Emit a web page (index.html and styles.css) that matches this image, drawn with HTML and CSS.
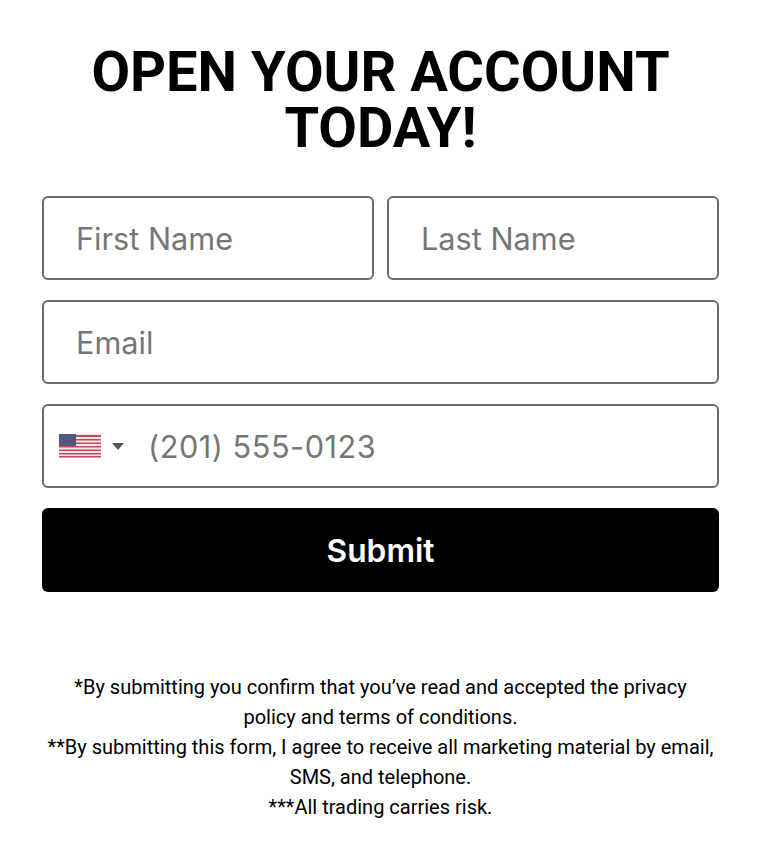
FILE: index.html
```html
<!DOCTYPE html>
<html lang="en">
<head>
	<meta charset="UTF-8">
	<title>Open your account</title>
	<link rel="stylesheet" href="styles.css">
</head>
<body>
	<div class="wrap">
		<h1>OPEN YOUR ACCOUNT TODAY!</h1>
		<form class="form">
			<div class="row">
				<input class="field" type="text" placeholder="First Name">
				<input class="field" type="text" placeholder="Last Name">
			</div>
			<input class="field" type="email" placeholder="Email">
			<div class="phone">
				<svg class="flag" width="42" height="24" viewBox="0 0 42 24">
					<rect width="42" height="24" fill="#f2e6e8"/>
					<g fill="#c8495e">
						<rect y="1" width="42" height="2"/>
						<rect y="5" width="42" height="1.5"/>
						<rect y="8.5" width="42" height="1.5"/>
						<rect y="12" width="42" height="1.5"/>
						<rect y="15.500" width="42" height="1.5"/>
						<rect y="19" width="42" height="1.500"/>
						<rect y="22" width="42" height="1.500"/>
					</g>
					<rect width="17" height="12" fill="#55587c"/>
				</svg>
				<span class="arrow"></span>
				<input class="phone-input" type="tel" placeholder="(201) 555-0123">
			</div>
			<button class="submit" type="button">Submit</button>
		</form>
		<p class="terms">*By submitting you confirm that you’ve read and accepted the privacy policy and terms of conditions.<br>**By submitting this form, I agree to receive all marketing material by email, SMS, and telephone.<br>***All trading carries risk.</p>
	</div>
</body>
</html>
```

FILE: styles.css
```css
*{margin: 0;padding: 0;box-sizing: border-box;}
body { background: #fff; color: #000; font-family: "Roboto", "Liberation Sans", sans-serif; }
.wrap { width: 677px; margin: 0 0 0 42px; padding-top: 44px; }
h1 { font-size: 56px; line-height: 56px; font-weight: 700; text-align: center; width: 640px; margin: 0 auto 40px; }
.form { display: flex; flex-direction: column; gap: 20px; }
.row { display: flex; gap: 13px; }
.row .field { flex: 1; min-width: 0; }
.field, .phone { width: 100%; height: 84px; border: 2px solid #6b6b6b; border-radius: 6px; background: #fff; }
.field { padding: 1px 32px 0; font-family: "Inter", sans-serif; font-size: 30.7px; color: #222; outline: none; }
.phone { display: flex; align-items: center; padding-left: 15px; }
.flag { flex: none; }
.arrow { flex: none; margin-left: 11px; border-left: 6px solid transparent; border-right: 6px solid transparent; border-top: 7px solid #555; }
.phone-input { flex: 1; min-width: 0; height: 100%; margin-left: 24px; padding-top: 1px; border: 0; background: none; font-family: "Inter", sans-serif; font-size: 30.7px; letter-spacing: 0.5px; outline: none; }
input::placeholder { color: #767676; opacity: 1; }
.submit { height: 84px; border: 0; border-radius: 6px; background: #000; color: #fff; font-family: "Inter", sans-serif; font-size: 31.7px; font-weight: 600; }
.terms { width: 667px; margin: 80px auto 0; font-size: 20px; line-height: 30px; text-align: center; }
```
